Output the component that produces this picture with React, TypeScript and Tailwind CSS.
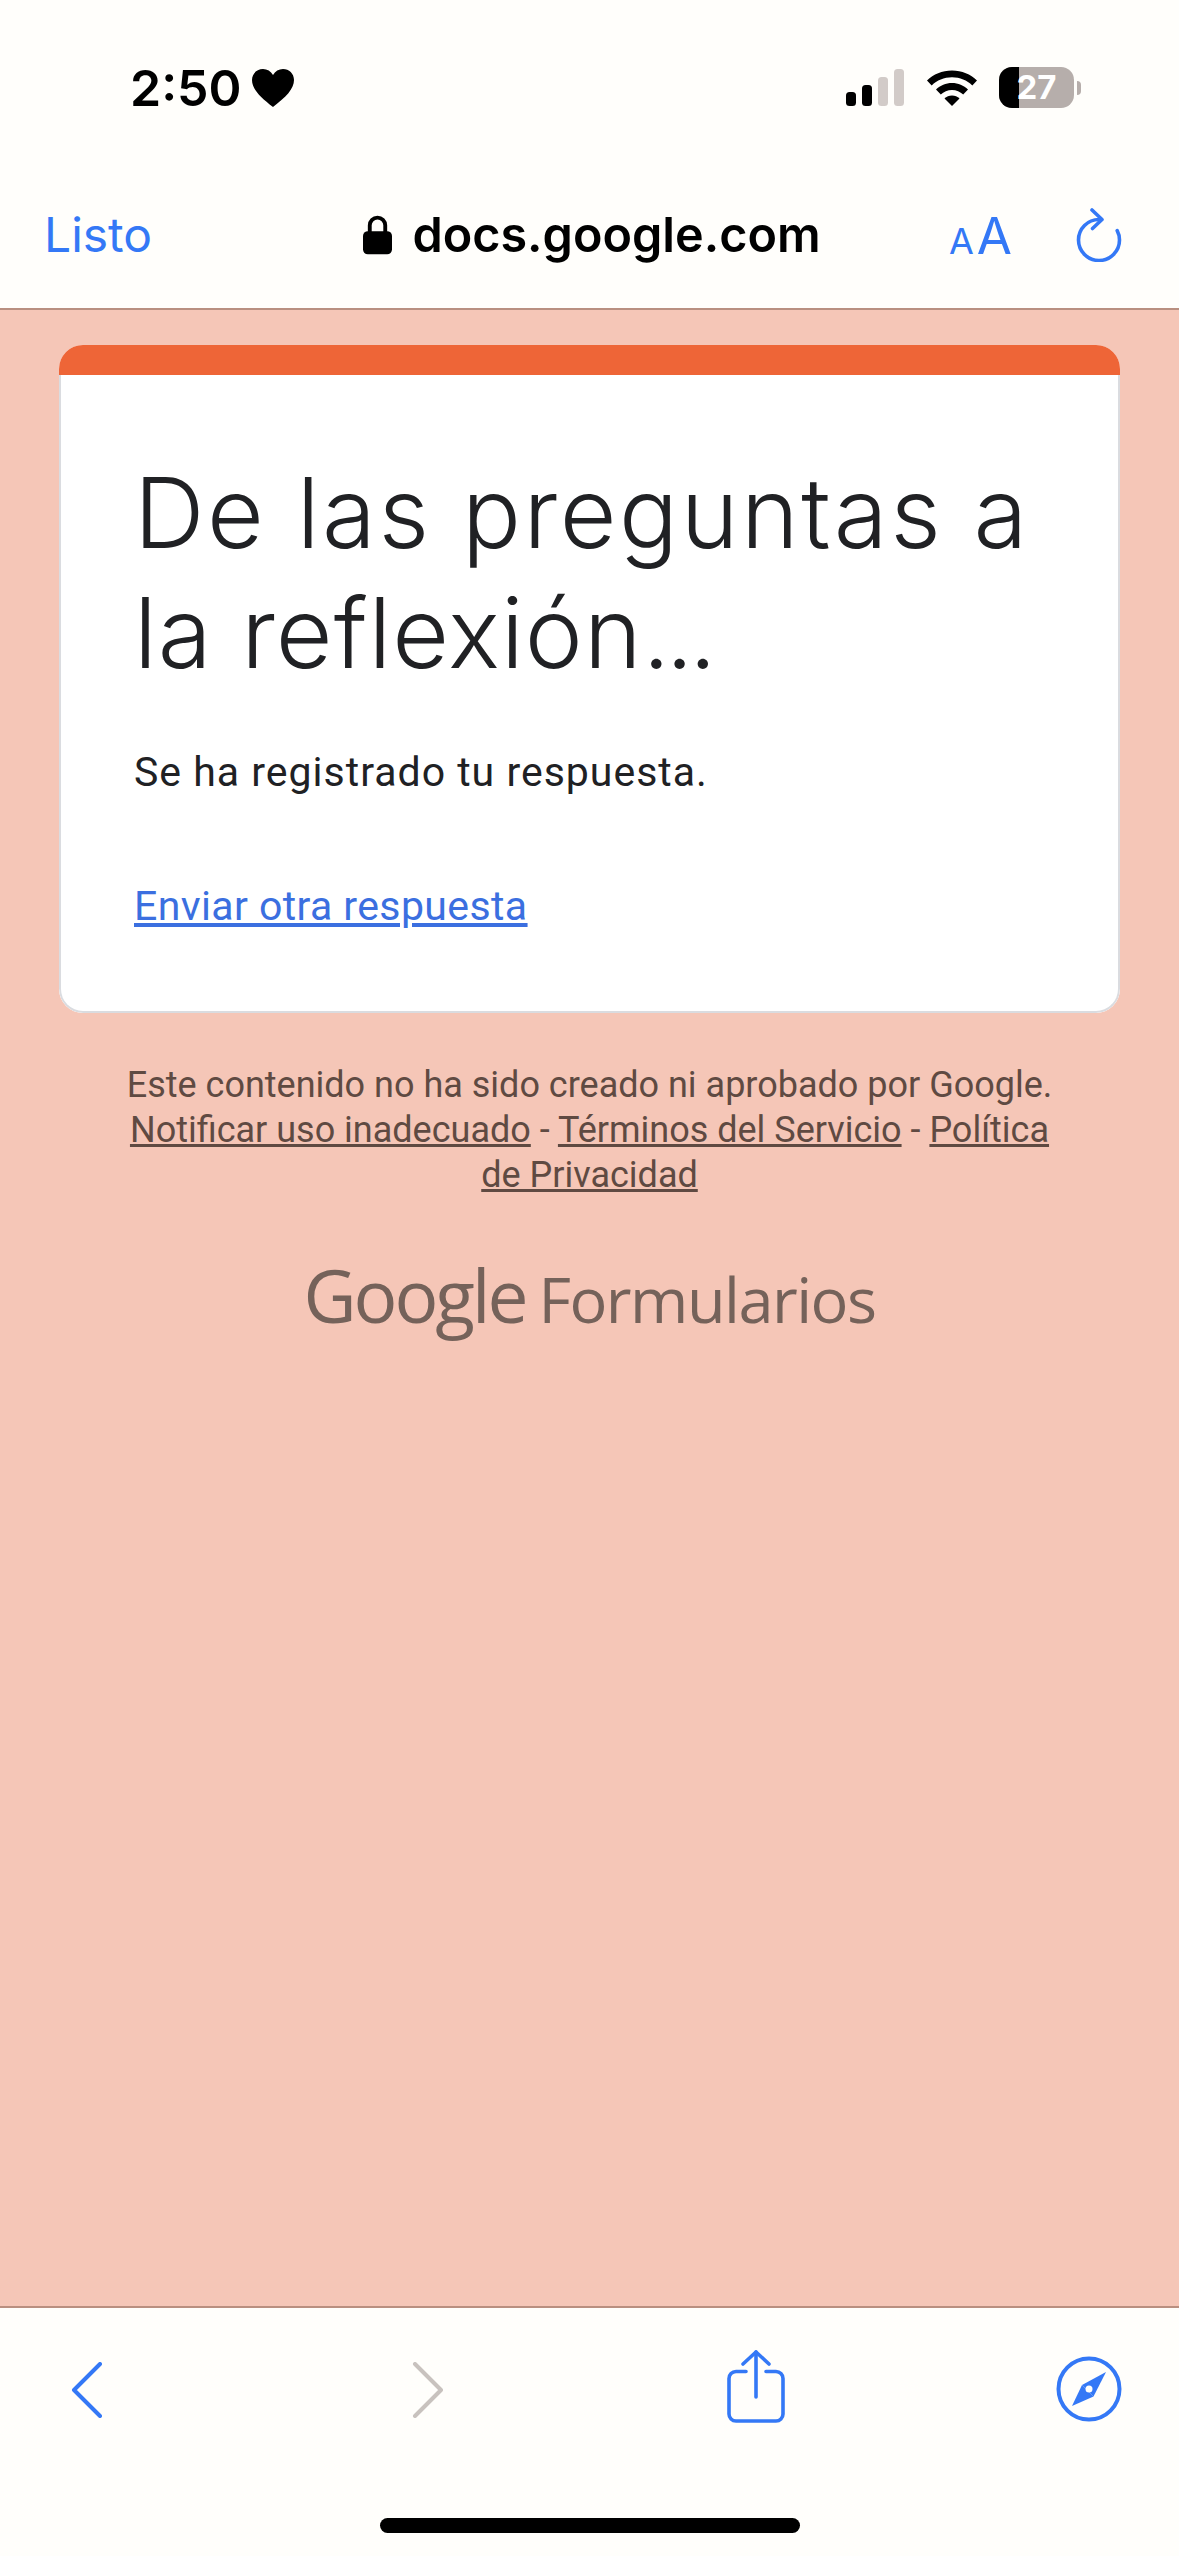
import React from 'react';

const roboto = "font-['Roboto',sans-serif]";

const SignalIcon = () => (
  <svg width="58" height="37" viewBox="0 0 58 37" className="block">
    <rect x="0" y="23" width="10" height="14" rx="3.5" fill="#000" />
    <rect x="16" y="16" width="10" height="21" rx="3.5" fill="#000" />
    <rect x="32" y="8" width="10" height="29" rx="3.5" fill="#d2cbc8" />
    <rect x="48" y="0" width="10" height="37" rx="3.5" fill="#d2cbc8" />
  </svg>
);

const WifiIcon = () => (
  <svg width="52" height="37" viewBox="0 0 52 37" className="block">
    <path d="M1 11.5C7.5 5.2 16 1.5 26 1.5s18.500 3.700 25 10l-4.700 5C41 11.300 34 8.300 26 8.300S11 11.300 5.700 16.500z" fill="#000" />
    <path d="M10 20.500C14.200 16.600 19.800 14 26 14s11.800 2.600 16 6.500l-4.800 5C34.300 22.800 30.300 21 26 21s-8.300 1.800-11.200 4.500z" fill="#000" />
    <path d="M18.500 29.500C20.500 27.700 23.100 26.500 26 26.500s5.500 1.200 7.500 3L26 37z" fill="#000" />
  </svg>
);

const Battery = () => (
  <div className="flex items-center gap-[3px]">
    <div className="relative flex h-[41px] w-[75px] items-center justify-center overflow-hidden rounded-[13px] bg-[#b6aeab]">
      <div className="absolute inset-y-0 left-0 w-[20px] bg-black" />
      <span className="relative font-['Inter',sans-serif] text-[33px] leading-none font-bold text-white">27</span>
    </div>
    <div className="h-[14px] w-[4px] rounded-r-full bg-[#b6aeab]" />
  </div>
);

const Reload = () => (
  <svg width="46" height="54" viewBox="0 0 46 54" fill="none" stroke="#3478f6" strokeWidth="3.600" strokeLinecap="round" strokeLinejoin="round" className="block">
    <path d="M23 11.500A20.500 20.500 0 1 0 43.500 32c0-3.500-.8-6.500-2.300-9.300" />
    <path d="M16 2l10 9.500-9.500 9" />
  </svg>
);

const Chevron = ({ color, flip }: { color: string; flip?: boolean }) => (
  <svg width="32" height="56" viewBox="0 0 32 56" fill="none" stroke={color} strokeWidth="4" strokeLinecap="round" strokeLinejoin="round" className={flip ? 'block -scale-x-100' : 'block'}>
    <path d="M29 2L3 28l26 26" />
  </svg>
);

const ShareIcon = () => (
  <svg width="58" height="74" viewBox="0 0 58 74" fill="none" stroke="#3478f6" strokeWidth="3.600" strokeLinecap="round" strokeLinejoin="round" className="block">
    <path d="M19 21.500H9a7 7 0 0 0-7 7V64a7 7 0 0 0 7 7h40a7 7 0 0 0 7-7V28.500a7 7 0 0 0-7-7H39" />
    <path d="M29 47V2" />
    <path d="M16 14L29 2l13 12" />
  </svg>
);

const CompassIcon = () => (
  <svg width="66" height="66" viewBox="0 0 66 66" className="block">
    <circle cx="33" cy="33" r="30.500" fill="none" stroke="#3478f6" strokeWidth="4" />
    <path d="M50 16L37.500 40.500 26 29z" fill="#3478f6" />
    <path d="M16 50l10-21 11.500 11.500z" fill="#3478f6" />
    <circle cx="33" cy="33" r="3.500" fill="#fffefb" />
  </svg>
);

export default function App() {
  return (
    <div className="flex h-[2556px] w-[1179px] flex-col overflow-hidden bg-[#f5c6b7]">
      {/* top chrome */}
      <header className="h-[310px] shrink-0 border-b-2 border-[#b98f80] bg-[#fffefb]">
        <div className="mt-[67px] flex h-[41px] items-center justify-between pr-[98px] pl-[130px]">
          <div className="flex items-center gap-[10px]">
            <span className="font-['Inter',sans-serif] text-[50px] leading-none font-semibold text-black">2:50</span>
            <svg width="42" height="38" viewBox="0 0 42 38" className="block">
              <path d="M21 38C8 28 0 20 0 11 0 4.500 5 0 11 0c4.200 0 7.800 2.200 10 6 2.200-3.800 5.800-6 10-6 6 0 11 4.500 11 11 0 9-8 17-21 27z" fill="#000" />
            </svg>
          </div>
          <div className="flex items-center">
            <SignalIcon />
            <div className="ml-[22px]"><WifiIcon /></div>
            <div className="ml-[21px]"><Battery /></div>
          </div>
        </div>
        <div className="mt-[100px] grid h-[54px] grid-cols-[1fr_auto_1fr] items-center pr-[57px] pl-[44px]">
          <span className="font-['Inter',sans-serif] text-[48px] leading-none text-[#3478f6]">Listo</span>
          <div className="ml-[18px] flex items-center gap-[20px]">
            <svg width="29" height="40" viewBox="0 0 30 40" className="block">
              <path d="M7 17V10a8 8 0 0 1 16 0v7" fill="none" stroke="#000" strokeWidth="4" />
              <rect x="0" y="16" width="30" height="24" rx="5" fill="#000" />
            </svg>
            <span className="font-['Inter',sans-serif] text-[48.500px] leading-none font-semibold text-black">docs.google.com</span>
          </div>
          <div className="flex items-center justify-end gap-[64px]">
            <div className="flex items-baseline gap-[3px] font-['Inter',sans-serif] leading-none text-[#3478f6]">
              <span className="text-[36px]">A</span>
              <span className="text-[51px]">A</span>
            </div>
            <Reload />
          </div>
        </div>
      </header>

      {/* form page */}
      <main className="flex-1 px-[59px] pt-[35px]">
        <div className="overflow-hidden rounded-[24px] bg-white">
          <div className="h-[30px] bg-[#ee6537]" />
          <div className="rounded-b-[24px] border-x-2 border-b-2 border-[#dadce0] px-[73px] pt-[78px] pb-[79px]">
            <h1 className="font-['Inter',sans-serif] text-[98px] leading-[120px] font-light text-[#202124]">
              <span className="tracking-[2.600px]">De las preguntas a</span>
              <br />
              <span className="tracking-[1px]">la reflexión</span>
              <span className="tracking-[-4.500px]">...</span>
            </h1>
            <p className={`${roboto} mt-[53px] text-[41px] leading-[52px] tracking-[1px] text-[#202124]`}>
              Se ha registrado tu respuesta.
            </p>
            <a className={`${roboto} mt-[82px] block text-[41px] leading-[52px] tracking-[0.4px] text-[#3b6fe0] underline`}>
              Enviar otra respuesta
            </a>
          </div>
        </div>
        <div className={`${roboto} mt-[50px] text-center text-[36px] leading-[45px] text-[#5f4a42]`}>
          <p>Este contenido no ha sido creado ni aprobado por Google.</p>
          <p className="mx-auto w-[960px]">
            <span className="underline">Notificar uso inadecuado</span> - <span className="underline">Términos del Servicio</span> - <span className="underline">Política de Privacidad</span>
          </p>
        </div>
        <div className="mt-[57px] flex items-baseline justify-center gap-[13px] text-[#75625a]">
          <span className="font-['Open_Sans',sans-serif] text-[73px] leading-[80px] font-medium tracking-[-3px]">Google</span>
          <span className="font-['Open_Sans',sans-serif] text-[63px] leading-[80px] tracking-[-1.500px]">Formularios</span>
        </div>
      </main>

      {/* bottom toolbar */}
      <footer className="h-[250px] shrink-0 border-t-2 border-[#b98f80] bg-[#fffefb]">
        <div className="flex h-[210px] items-start pt-[42px] pl-[71px]">
          <div className="mt-[12px]"><Chevron color="#3478f6" /></div>
          <div className="mt-[12px] ml-[309px]"><Chevron color="#c8c2be" flip /></div>
          <div className="ml-[283px]"><ShareIcon /></div>
          <div className="mt-[6px] ml-[271px]"><CompassIcon /></div>
        </div>
        <div className="mx-auto h-[15px] w-[420px] rounded-full bg-black" />
      </footer>
    </div>
  );
}
